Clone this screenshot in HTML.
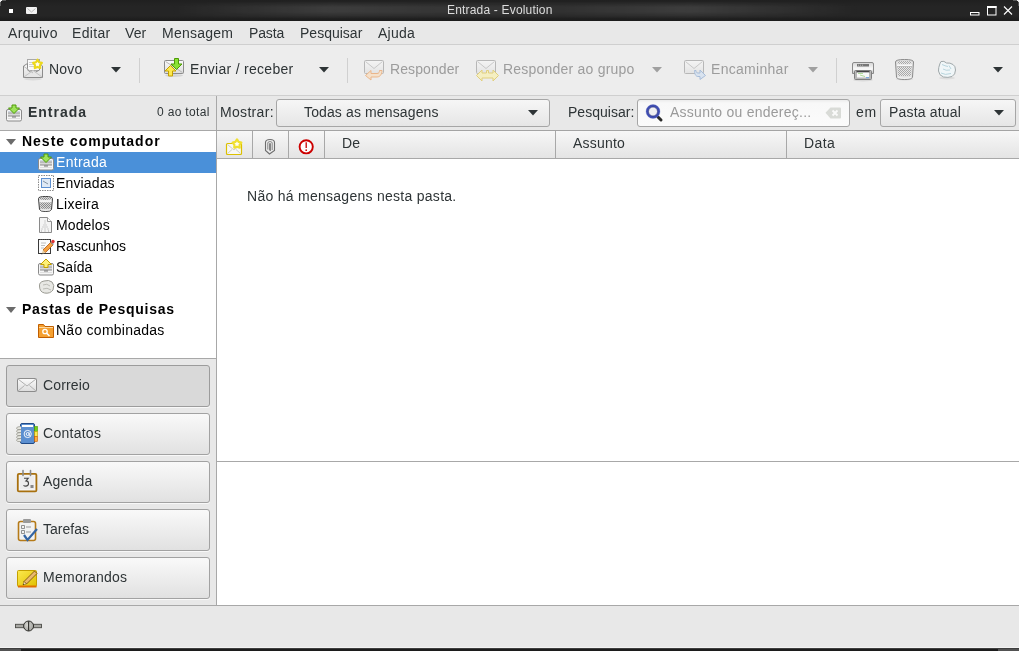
<!DOCTYPE html>
<html><head><meta charset="utf-8">
<style>
*{margin:0;padding:0;box-sizing:border-box}
html,body{width:1019px;height:651px;overflow:hidden;background:#e8e8e8}
body{position:relative;font-family:"Liberation Sans",sans-serif;font-size:14px;color:#2e3436}
.a{position:absolute}
.t{position:absolute;white-space:nowrap;line-height:16px}
svg{position:absolute;overflow:visible}
</style></head><body>

<!-- title bar -->
<div class="a" style="left:0;top:0;width:1019px;height:21px;background:linear-gradient(#202020,#252525 30%,#252525 75%,#1b1b1b)"></div>
<div class="a" style="left:0;top:1px;width:1019px;height:18px;background:linear-gradient(to right,rgba(255,255,255,0) 170px,rgba(255,255,255,0.11) 330px,rgba(255,255,255,0.07) 470px,rgba(255,255,255,0.06) 560px,rgba(255,255,255,0.11) 690px,rgba(255,255,255,0) 860px);-webkit-mask-image:linear-gradient(to bottom,transparent,#000 35%,#000 60%,transparent)"></div>
<div class="a" style="left:0;top:0;width:2px;height:1px;background:#f0f0f0"></div>
<div class="a" style="left:0;top:1px;width:1px;height:1px;background:#e0e0e0"></div>
<div class="a" style="left:2px;top:0;width:4px;height:1px;background:#5a5a5a"></div>
<div class="a" style="left:0;top:2px;width:1px;height:4px;background:#5a5a5a"></div>
<div class="a" style="left:1017px;top:0;width:2px;height:1px;background:#f0f0f0"></div>
<div class="a" style="left:1018px;top:1px;width:1px;height:1px;background:#e0e0e0"></div>
<div class="a" style="left:1013px;top:0;width:4px;height:1px;background:#5a5a5a"></div>
<div class="a" style="left:1018px;top:2px;width:1px;height:4px;background:#5a5a5a"></div>

<!-- menubar -->
<div class="a" style="left:0;top:21px;width:1019px;height:24px;background:#e8e8e8;border-bottom:1px solid #cfcfcf"></div>

<!-- toolbar -->
<div class="a" style="left:0;top:45px;width:1019px;height:51px;background:#ededed;border-bottom:1px solid #cfcfcf"></div>
<div class="a" style="left:139px;top:58px;width:1px;height:25px;background:#d0d0d0"></div>
<div class="a" style="left:347px;top:58px;width:1px;height:25px;background:#d0d0d0"></div>
<div class="a" style="left:836px;top:58px;width:1px;height:25px;background:#d0d0d0"></div>
<svg style="left:111px;top:67px" width="10" height="6"><path d="M0 0H10L5 5.5Z" fill="#2e3436"/></svg>
<svg style="left:319px;top:67px" width="10" height="6"><path d="M0 0H10L5 5.5Z" fill="#2e3436"/></svg>
<svg style="left:652px;top:67px" width="10" height="6"><path d="M0 0H10L5 5.5Z" fill="#a0a0a0"/></svg>
<svg style="left:808px;top:67px" width="10" height="6"><path d="M0 0H10L5 5.5Z" fill="#a0a0a0"/></svg>
<svg style="left:993px;top:67px" width="10" height="6"><path d="M0 0H10L5 5.5Z" fill="#2e3436"/></svg>

<!-- header row -->
<div class="a" style="left:216px;top:96px;width:1px;height:509px;background:#a8a8a8"></div>
<div class="a" style="left:276px;top:99px;width:274px;height:28px;border:1px solid #a6a6a6;border-radius:3px;background:linear-gradient(#f6f6f6,#e6e6e6)"></div>
<svg style="left:528px;top:110px" width="10" height="6"><path d="M0 0H10L5 5.5Z" fill="#2e3436"/></svg>
<div class="a" style="left:637px;top:99px;width:213px;height:28px;border:1px solid #a6a6a6;border-radius:3px;background:linear-gradient(#ececec,#f8f8f8 3px,#fbfbfb)"></div>
<div class="a" style="left:880px;top:99px;width:136px;height:28px;border:1px solid #a6a6a6;border-radius:3px;background:linear-gradient(#f6f6f6,#e6e6e6)"></div>
<svg style="left:994px;top:110px" width="10" height="6"><path d="M0 0H10L5 5.5Z" fill="#2e3436"/></svg>

<!-- folder tree -->
<div class="a" style="left:0;top:130px;width:216px;height:229px;background:#fff;border-top:1px solid #a8a8a8;border-bottom:1px solid #a8a8a8"></div>
<div class="a" style="left:0;top:152px;width:216px;height:21px;background:#4a90d9"></div>
<svg style="left:6px;top:139px" width="10" height="6"><path d="M0 0H10L5 6Z" fill="#6b6b6b"/></svg>
<svg style="left:6px;top:307px" width="10" height="6"><path d="M0 0H10L5 6Z" fill="#6b6b6b"/></svg>

<!-- switcher buttons -->
<div class="a" style="left:6px;top:365px;width:204px;height:42px;border:1px solid #9c9c9c;border-radius:3px;box-shadow:0 1px 0 #f8f8f8;background:#d9d9d9"></div>
<div class="a" style="left:6px;top:413px;width:204px;height:42px;border:1px solid #a2a2a2;border-radius:3px;box-shadow:0 1px 0 #f8f8f8;background:linear-gradient(#f9f9f9,#e1e1e1)"></div>
<div class="a" style="left:6px;top:461px;width:204px;height:42px;border:1px solid #a2a2a2;border-radius:3px;box-shadow:0 1px 0 #f8f8f8;background:linear-gradient(#f9f9f9,#e1e1e1)"></div>
<div class="a" style="left:6px;top:509px;width:204px;height:42px;border:1px solid #a2a2a2;border-radius:3px;box-shadow:0 1px 0 #f8f8f8;background:linear-gradient(#f9f9f9,#e1e1e1)"></div>
<div class="a" style="left:6px;top:557px;width:204px;height:42px;border:1px solid #a2a2a2;border-radius:3px;box-shadow:0 1px 0 #f8f8f8;background:linear-gradient(#f9f9f9,#e1e1e1)"></div>

<!-- message list -->
<div class="a" style="left:216px;top:130px;width:803px;height:1px;background:#a4a4a4"></div>
<div class="a" style="left:217px;top:131px;width:802px;height:28px;background:linear-gradient(#f7f7f7,#e4e4e4);border-bottom:1px solid #a8a8a8"></div>
<div class="a" style="left:252px;top:131px;width:1px;height:27px;background:#a8a8a8"></div>
<div class="a" style="left:288px;top:131px;width:1px;height:27px;background:#a8a8a8"></div>
<div class="a" style="left:324px;top:131px;width:1px;height:27px;background:#a8a8a8"></div>
<div class="a" style="left:555px;top:131px;width:1px;height:27px;background:#a8a8a8"></div>
<div class="a" style="left:786px;top:131px;width:1px;height:27px;background:#a8a8a8"></div>
<div class="a" style="left:217px;top:159px;width:802px;height:302px;background:#fff"></div>
<div class="a" style="left:217px;top:461px;width:802px;height:1px;background:#a8a8a8"></div>
<div class="a" style="left:217px;top:462px;width:802px;height:143px;background:#fff"></div>

<!-- status bar -->
<div class="a" style="left:0;top:605px;width:1019px;height:1px;background:#a8a8a8"></div>
<div class="a" style="left:0;top:606px;width:1019px;height:41px;background:#e8e8e8"></div>
<div class="a" style="left:0;top:647px;width:1019px;height:1px;background:#f2f2f2"></div>
<div class="a" style="left:0;top:648px;width:1019px;height:1px;background:#3e3e3e"></div>
<div class="a" style="left:0;top:649px;width:1019px;height:2px;background:#1c1c1c"></div>
<div class="a" style="left:0;top:649px;width:21px;height:2px;background:#525252"></div>
<div class="a" style="left:998px;top:649px;width:21px;height:2px;background:#525252"></div>

<svg style="left:0;top:0" width="1019" height="651" viewBox="0 0 1019 651">
<defs>
<linearGradient id="env" x1="0" y1="0" x2="0" y2="1"><stop offset="0" stop-color="#fbfbfb"/><stop offset="1" stop-color="#dcdcdc"/></linearGradient>
<linearGradient id="grey" x1="0" y1="0" x2="0" y2="1"><stop offset="0" stop-color="#e0e0e0"/><stop offset="1" stop-color="#9a9a9a"/></linearGradient>
<pattern id="mesh" width="2" height="2" patternUnits="userSpaceOnUse"><rect width="2" height="2" fill="#d8d8d8"/><rect width="1" height="1" fill="#7a7a7a"/><rect x="1" y="1" width="1" height="1" fill="#7a7a7a"/></pattern>
<linearGradient id="prn" x1="0" y1="0" x2="0" y2="1"><stop offset="0" stop-color="#d6d6d6"/><stop offset="0.5" stop-color="#f4f4f4"/><stop offset="1" stop-color="#c4c4c4"/></linearGradient>
<pattern id="mesh2" width="2" height="2" patternUnits="userSpaceOnUse"><rect width="2" height="2" fill="#e8e8e8"/><rect width="1" height="1" fill="#a8a8a8"/><rect x="1" y="1" width="1" height="1" fill="#a8a8a8"/></pattern>
<linearGradient id="trayin" x1="0" y1="0" x2="0" y2="1"><stop offset="0" stop-color="#9a9a9a"/><stop offset="0.5" stop-color="#d8d8d8"/><stop offset="1" stop-color="#8a8a8a"/></linearGradient>
<pattern id="mesh3" width="2" height="2" patternUnits="userSpaceOnUse"><rect width="2" height="2" fill="#d8d8d8"/><rect width="1" height="1" fill="#8a8a8a"/><rect x="1" y="1" width="1" height="1" fill="#8a8a8a"/></pattern>
<linearGradient id="memo" x1="0" y1="0" x2="1" y2="1"><stop offset="0" stop-color="#fce94f"/><stop offset="1" stop-color="#e0c000"/></linearGradient>
<radialGradient id="plug" cx="0.4" cy="0.4" r="0.7"><stop offset="0" stop-color="#d8d8d4"/><stop offset="1" stop-color="#9a9a96"/></radialGradient>
</defs>
<!-- title bar icons -->
<g>
<rect x="9" y="9" width="4" height="4" fill="#fff"/>
<rect x="26" y="7" width="11" height="7" rx="1" fill="#f2f2f2"/>
<path d="M27.5 8.5L31.5 12L35.5 8.5" stroke="#aaa" stroke-width="0.8" fill="none"/>
<rect x="970.5" y="12.5" width="8.5" height="2.5" fill="none" stroke="#fff" stroke-width="1"/>
<rect x="987.5" y="6.5" width="8.5" height="8.5" fill="none" stroke="#fff" stroke-width="1"/>
<rect x="987" y="6" width="9.5" height="2" fill="#fff"/>
<path d="M1004 6.5L1012 14.5M1012 6.5L1004 14.5" stroke="#fff" stroke-width="1.1"/>
</g>
<!-- Novo icon -->
<g>
<ellipse cx="33" cy="79" rx="9" ry="1.5" fill="#000" opacity="0.08"/>
<rect x="27.5" y="59.5" width="12" height="11" fill="#fafafa" stroke="#a8a8a8"/>
<path d="M29 62.5h8M29 64.5h8M29 66.5h6" stroke="#cfcfcf"/>
<path d="M23.5 66L27.5 63.5V70L33 73.5L39.5 70V63.5L42.5 66V77.5H23.5Z" fill="url(#env)" stroke="#8c8c8c"/>
<path d="M24 77L33 70.5L42 77" fill="#e6e6e6" stroke="#c4c4c4"/>
<path d="M24 66.5L33 73" stroke="#bdbdbd" fill="none"/>
<path d="M37.50 59.70L39.03 62.20L41.87 62.88L39.97 65.10L40.20 68.02L37.50 66.90L34.80 68.02L35.03 65.10L33.13 62.88L35.97 62.20Z" fill="#fffef0" stroke="#ecd81c" stroke-width="2.2" stroke-linejoin="round"/>
</g>
<!-- Enviar/receber icon -->
<g>
<ellipse cx="174" cy="75.5" rx="9" ry="1.5" fill="#000" opacity="0.1"/>
<rect x="164.5" y="60.5" width="19" height="13" rx="1" fill="url(#env)" stroke="#8c8c8c"/>
<path d="M165.5 61.5L182.5 72.5" stroke="#aaa" stroke-width="0.8"/>
<path d="M174.5 58.5h4v5.5h3.5l-5.5 5.5l-5.5-5.5h3.5z" fill="#8ae234" stroke="#4e9a06" stroke-linejoin="round"/>
<path d="M170.5 65.5l5.5 5.5h-3.5v5h-4v-5h-3.5z" fill="#fce94f" stroke="#c4a000" stroke-linejoin="round"/>
</g>
<!-- Responder (disabled) -->
<g opacity="0.55">
<rect x="364.5" y="60.5" width="19" height="13" rx="1" fill="url(#env)" stroke="#8c8c8c"/>
<path d="M365.5 61.5L374 68.5L382.5 61.5" stroke="#aaa" fill="none"/>
<path d="M365.5 75.5L371 70.5v3h6c2 0 2.5-1.5 2.5-3h2.5c0 3-1.5 6.5-5 6.5h-6v3z" fill="#fcd9b0" stroke="#e9893a" stroke-linejoin="round"/>
</g>
<!-- Responder ao grupo (disabled) -->
<g opacity="0.55">
<rect x="476.5" y="60.5" width="19" height="13" rx="1" fill="url(#env)" stroke="#8c8c8c"/>
<path d="M477.5 61.5L486 68.5L494.5 61.5" stroke="#aaa" fill="none"/>
<path d="M476.5 75.5L482 70v3h4.5l0-2.5h2v2.5h4.5v-3l5.5 5.5l-5.5 5.5v-3h-11v3z" fill="#fcf2a0" stroke="#d8b820" stroke-linejoin="round"/>
</g>
<!-- Encaminhar (disabled) -->
<g opacity="0.55">
<rect x="684.5" y="60.5" width="19" height="13" rx="1" fill="url(#env)" stroke="#8c8c8c"/>
<path d="M685.5 61.5L694 68.5L702.5 61.5" stroke="#aaa" fill="none"/>
<path d="M705.5 75.5L700 70v3h-2c-1.5 0-2-1-2-2.5h-1.5c0 3 1 6 3.5 6h2v3z" fill="#c9dbf2" stroke="#6f95c8" stroke-linejoin="round"/>
</g>
<!-- Printer -->
<g>
<ellipse cx="863" cy="80" rx="10" ry="1.5" fill="#000" opacity="0.08"/>
<path d="M852.5 64Q852.5 62.5 854 62.5H872Q873.5 62.5 873.5 64V73.5H852.5Z" fill="url(#prn)" stroke="#8a8a8a"/>
<rect x="857" y="64" width="12" height="2.5" fill="#777"/>
<path d="M858 65.2h1M860 65.2h1M862 65.2h1" stroke="#ccc" stroke-width="0.8"/>
<rect x="853.5" y="68" width="19" height="2.5" fill="#f6f6f6"/>
<rect x="854.5" y="70.5" width="17" height="9" rx="1" fill="#b8b8b8" stroke="#7e7e7e"/>
<rect x="856.5" y="71" width="13" height="1.5" fill="#444"/>
<rect x="857" y="72.5" width="12" height="5" fill="#f8f8f8"/>
<path d="M858 73.5h5M860 75l5 1.5" stroke="#a8d890" stroke-width="0.9"/>
<rect x="866" y="77" width="3" height="1.2" fill="#7aa8e0"/>
</g>
<!-- Trash -->
<g>
<ellipse cx="904.5" cy="79" rx="9" ry="1.5" fill="#000" opacity="0.08"/>
<path d="M895.5 62Q895.5 59.5 904.5 59.5Q913.5 59.5 913.5 62L912.5 77Q912 79.5 904.5 79.5Q897 79.5 896.5 77Z" fill="#e2e2e2" stroke="#8a8a8a"/>
<ellipse cx="904.5" cy="62.5" rx="7.5" ry="1.8" fill="url(#mesh2)"/>
<rect x="897" y="64.5" width="15" height="2" fill="#f8f8f8"/>
<path d="M897 66.5h15" stroke="#b0b0b0" stroke-width="0.8"/>
<path d="M897.5 67L898 76H911L911.5 67Z" fill="url(#mesh2)"/>
<path d="M897.5 77.5Q904.5 79 911.5 77.5" stroke="#f6f6f6" stroke-width="1.2" fill="none"/>
</g>
<!-- Spam -->
<g>
<ellipse cx="947" cy="78" rx="8" ry="1.5" fill="#000" opacity="0.07"/>
<path d="M941 61.5Q944 60.5 946.5 63Q950 62.5 953 64.5Q955.5 66 955.5 70Q955.5 74.5 952 76.5Q948 78 943.5 77Q939 75.5 938.5 71Q938.5 67 939.5 65Q940 63 941 61.5Z" fill="#f0f6f8" stroke="#a0a8aa"/>
<path d="M942 64.5Q945 66 948 66.5M943 69Q946 71 950 70M941 73Q945 75.5 951 73.5M949 65.5L951 69" stroke="#a8ccd6" fill="none" stroke-width="0.8"/>
</g>
<!-- Search icon -->
<g>
<path d="M658 117L661 120" stroke="#2a2a2a" stroke-width="3" stroke-linecap="round"/>
<circle cx="653" cy="111.5" r="5.8" fill="#f0f0f2" stroke="#3f4db0" stroke-width="2.4"/>
<circle cx="653" cy="111.5" r="4.5" fill="none" stroke="#232a78" stroke-width="0.6"/>
<circle cx="653" cy="111.5" r="7" fill="none" stroke="#6c7ad0" stroke-width="0.5" opacity="0.6"/>
</g>
<!-- Clear icon -->
<g>
<path d="M825.5 112.8L830.5 107.5H840Q841 107.5 841 108.5V117.5Q841 118.5 840 118.5H830.5Z" fill="#d9dbd7"/>
<path d="M832.5 110.5L837.5 115.5M837.5 110.5L832.5 115.5" stroke="#fafafa" stroke-width="1.8"/>
</g>
<!-- Header Entrada icon -->
<g transform="translate(6,105)">
<rect x="0.5" y="4.5" width="15" height="11.5" rx="1.5" fill="#f6f6f6" stroke="#8a8a8a"/>
<rect x="2" y="6" width="12" height="1.5" fill="#d0d8e4"/>
<rect x="2" y="7.5" width="12" height="4" fill="url(#trayin)"/>
<rect x="6" y="11.5" width="4" height="1" fill="#707070"/>
<rect x="2" y="13" width="12" height="1" fill="#dedede"/>
</g><g transform="translate(6,104.5)"><path d="M6 0.5h4v3h3.5l-5.5 5.5l-5.5-5.5h3.5z" fill="#9ee35a" stroke="#4e9a06" stroke-linejoin="round"/></g>
<!-- tree icons -->
<g transform="translate(38,154)">
<rect x="0.5" y="4.5" width="15" height="11.5" rx="1.5" fill="#f6f6f6" stroke="#8a8a8a"/>
<rect x="2" y="6" width="12" height="1.5" fill="#d0d8e4"/>
<rect x="2" y="7.5" width="12" height="4" fill="url(#trayin)"/>
<rect x="6" y="11.5" width="4" height="1" fill="#707070"/>
<rect x="2" y="13" width="12" height="1" fill="#dedede"/>
</g><g transform="translate(38,153.5)"><path d="M6 0.5h4v3h3.5l-5.5 5.5l-5.5-5.5h3.5z" fill="#9ee35a" stroke="#4e9a06" stroke-linejoin="round"/></g>
<g>
<rect x="38.5" y="175.5" width="15" height="15" fill="#fff" stroke="#8a8a8a" stroke-dasharray="1.5 1"/>
<rect x="41.5" y="178.5" width="9" height="9" fill="#dfe9f5" stroke="#5d8fd0"/>
<path d="M43 181L48 184" stroke="#6a7a8a" stroke-width="0.8"/>
</g>
<g>
<path d="M38.5 198.5Q38.5 196.5 45.5 196.5Q52.5 196.5 52.5 198.5L51.5 209.5Q51 211.5 45.5 211.5Q40 211.5 39.5 209.5Z" fill="#e0e0e0" stroke="#3a3a3a"/>
<ellipse cx="45.5" cy="198.6" rx="5.8" ry="1.4" fill="url(#mesh3)"/>
<rect x="39.5" y="200.3" width="12" height="1.5" fill="#fafafa"/>
<path d="M40 202.5L40.5 208.8H50.5L51 202.5Z" fill="url(#mesh3)"/>
<path d="M40.5 209.8Q45.5 211 50.5 209.8" stroke="#f4f4f4" fill="none"/>
</g>
<g>
<path d="M39.5 217.5h8l4 4v11h-12z" fill="#f4f4f4" stroke="#8a8a8a"/>
<path d="M47.5 217.5v4h4" fill="#fff" stroke="#9a9a9a"/>
<path d="M45 220.5v1M45 222.5v1M44 224.5v1M46 224.5v1M43 226.5v1M45 226.5v1M47 226.5v1M42 228.5v1M45 228.5v1M48 228.5v1M41.5 230.5v1M45 230.5v1M48.5 230.5v1" stroke="#a8a8a8"/>
</g>
<g>
<rect x="38.5" y="239.5" width="12" height="14" fill="#fbfbfb" stroke="#3a3a3a"/>
<path d="M40 239.5h9" stroke="#555" stroke-dasharray="1 1"/>
<path d="M41 243h5M41 245.5h4M41 248h3" stroke="#b0b0b0" stroke-width="0.8"/>
<path d="M43 250L50.5 242.5L53 245L45.5 252.5Z" fill="#f5a040" stroke="#b35a10" stroke-width="0.8"/>
<path d="M43 250L41.5 254L45.5 252.5Z" fill="#e8d0a0"/><path d="M41.8 253.2L41.5 254L42.4 253.8Z" fill="#222" stroke="#222" stroke-width="0.8"/>
<path d="M50.5 242.5L51.5 241.5L54 244L53 245Z" fill="#999"/>
<circle cx="53" cy="241.5" r="1.7" fill="#e03030"/>
</g>
<g transform="translate(38,259)">
<rect x="0.5" y="4.5" width="15" height="11.5" rx="1.5" fill="#f6f6f6" stroke="#8a8a8a"/>
<rect x="2" y="6" width="12" height="1.5" fill="#d0d8e4"/>
<rect x="2" y="7.5" width="12" height="4" fill="url(#trayin)"/>
<rect x="6" y="11.5" width="4" height="1" fill="#707070"/>
<rect x="2" y="13" width="12" height="1" fill="#dedede"/>
</g><g transform="translate(38,258.5)"><path d="M8 0.5l5.5 5.5h-3.5v3h-4v-3h-3.5z" fill="#fdf07a" stroke="#c4a000" stroke-linejoin="round"/></g>
<g>
<path d="M39.5 286Q39 282 44 281Q49 279.5 52 282Q55 285 53 290Q50 294 44.5 293Q39.5 292 39.5 286Z" fill="#e8e8e4" stroke="#9a9a92"/>
<path d="M43 285Q47 283 50 286M43 289Q47 287 51 290" stroke="#b0b0aa" fill="none" stroke-width="0.8"/>
</g>
<g>
<path d="M38.5 324.5h5l1.5 2h8.5v11h-15z" fill="#f5a030" stroke="#c05e00"/>
<rect x="39" y="327" width="14" height="1" fill="#fcd9a0"/>
<circle cx="45" cy="331.5" r="2.2" fill="none" stroke="#fff" stroke-width="1.3"/>
<path d="M46.5 333L49.5 336" stroke="#fff" stroke-width="1.5"/>
</g>
<!-- column header icons -->
<g>
<rect x="226.5" y="143.5" width="15" height="11" rx="1" fill="#f8f8f4" stroke="#dcc000" stroke-width="1.2"/>
<path d="M227.5 144.5L234 150L240.5 144.5M227.5 153.5L232 149.5M240.5 153.5L236 149.5" stroke="#c8c8c0" fill="none" stroke-width="0.9"/>
<path d="M237.00 139.40L238.59 141.82L241.37 142.58L239.57 144.83L239.70 147.72L237.00 146.70L234.30 147.72L234.43 144.83L232.63 142.58L235.41 141.82Z" fill="#fffef0" stroke="#f0e030" stroke-width="2.2" stroke-linejoin="round"/>
</g>
<g>
<path d="M269.5 154L265.5 150.5V142.5Q265.5 139.5 270 139.5Q274.5 139.5 274.5 142.5V150.5Z" fill="none" stroke="#6e6e6e" stroke-width="1.1"/>
<path d="M267.8 149.5V143Q267.8 141.6 270 141.6Q272.2 141.6 272.2 143V150M269.5 150.5V143.5Q270 142.8 270.5 143.5V151" fill="none" stroke="#7a7a7a" stroke-width="0.9"/>
</g>
<g>
<circle cx="306.2" cy="146.8" r="6.6" fill="#fff" stroke="#cc0000" stroke-width="1.9"/>
<path d="M306.2 142.3L306.2 148" stroke="#cc0000" stroke-width="1.3"/>
<circle cx="306.2" cy="150.2" r="0.85" fill="#cc0000"/>
</g>
<!-- button icons -->
<g>
<rect x="17.5" y="378.5" width="19" height="13" rx="1" fill="url(#env)" stroke="#8c8c8c"/>
<path d="M18 379L27 386L36 379M18 391L24.5 385.5M36 391L29.5 385.5" stroke="#b0b0b0" fill="none"/>
</g>
<g>
<rect x="20.5" y="423.5" width="14" height="20" rx="1.5" fill="#5b8fd0" stroke="#204a87"/>
<rect x="22" y="425" width="11" height="2" fill="#fff"/>
<rect x="34.5" y="426.5" width="3" height="5" fill="#73d216" stroke="#4e9a06" stroke-width="0.6"/>
<rect x="34.5" y="431.5" width="3" height="5" fill="#fce94f" stroke="#c4a000" stroke-width="0.6"/>
<rect x="34.5" y="436.5" width="3" height="5" fill="#fcaf3e" stroke="#ce5c00" stroke-width="0.6"/>
<path d="M21 426.5Q16 426.5 16.5 428.5Q17 430 21 429.5M21 429.5Q16 429.5 16.5 431.5Q17 433 21 432.5M21 432.5Q16 432.5 16.5 434.5Q17 436 21 435.5M21 435.5Q16 435.5 16.5 437.5Q17 439 21 438.5M21 438.5Q16 438.5 16.5 440.5Q17 442 21 441.5" stroke="#9a9a92" stroke-width="0.8" fill="#e6e6e0"/>
<circle cx="27.7" cy="434" r="3.6" fill="none" stroke="#fff" stroke-width="0.9"/>
<circle cx="27.7" cy="434" r="1.5" fill="none" stroke="#fff" stroke-width="0.9"/><path d="M29.2 432.5v2.5q0 1 1.2 0.8" stroke="#fff" stroke-width="0.9" fill="none"/>
</g>
<g>
<rect x="17.8" y="473.8" width="18.6" height="17.6" rx="1.2" fill="#f4f4f4" stroke="#a8700e" stroke-width="1.8"/>
<rect x="20" y="476" width="14" height="13" fill="#ededed"/>
<path d="M23 470.5v5M30.5 470.5v5" stroke="#8a8a8a" stroke-width="1.6" stroke-linecap="round"/>
<path d="M24 478.3h4.2l-2.3 2.6q2.6 0 2.6 2.6q0 2.6-2.8 2.6q-1.3 0-2.2-0.8" fill="none" stroke="#444" stroke-width="1.1"/>
<rect x="30.5" y="485" width="3" height="3" fill="#888"/>
</g>
<g>
<rect x="18.5" y="521.5" width="17" height="19" rx="2" fill="#f2f2f2" stroke="#b57a18" stroke-width="1.6"/>
<rect x="23" y="519" width="8" height="4" rx="1" fill="#9a9a9a"/>
<path d="M21.5 525.5h3v3h-3zM21.5 530.5h3v3h-3z" fill="none" stroke="#777" stroke-width="0.8"/>
<path d="M26 527h5M26 532h5" stroke="#999"/>
<path d="M24 535L27.5 540L37 529" fill="none" stroke="#3465a4" stroke-width="2.2"/>
</g>
<g>
<rect x="17.5" y="570.5" width="19" height="16" rx="1" fill="url(#memo)" stroke="#c4a000"/>
<rect x="18" y="585.5" width="18.5" height="2" fill="#e07000"/>
<path d="M24 581.5L34.5 571L37 573.5L26.5 584Z" fill="#e9b96e" stroke="#6f4502" stroke-width="0.8"/>
<path d="M24 581.5L23 584.8L26.5 584Z" fill="#f0e0c0" stroke="#6f4502" stroke-width="0.5"/>
<path d="M23.3 583.8L23 584.8L24.1 584.5Z" fill="#111"/>
</g>
<!-- status bar plug -->
<g>
<rect x="15.5" y="624.3" width="26" height="3.4" fill="#a8a8a4" stroke="#4a4a46" stroke-width="0.9"/>
<circle cx="28.6" cy="626" r="5" fill="url(#plug)" stroke="#2e2e2a" stroke-width="1"/>
<path d="M28.6 621.2v9.6" stroke="#2e2e2a" stroke-width="1.1"/>
</g>
</svg>
<div id="txt" style="position:absolute;left:0;top:0;width:1019px;height:651px;will-change:transform">
<div class="t" style="left:447px;top:2px;font-size:12px;font-weight:normal;letter-spacing:0.182px;color:#dcdcdc">Entrada - Evolution</div>
<div class="t" style="left:8px;top:25px;font-size:14px;font-weight:normal;letter-spacing:0.326px;color:#2e3436">Arquivo</div>
<div class="t" style="left:72px;top:25px;font-size:14px;font-weight:normal;letter-spacing:0.320px;color:#2e3436">Editar</div>
<div class="t" style="left:125px;top:25px;font-size:14px;font-weight:normal;letter-spacing:0.068px;color:#2e3436">Ver</div>
<div class="t" style="left:162px;top:25px;font-size:14px;font-weight:normal;letter-spacing:0.234px;color:#2e3436">Mensagem</div>
<div class="t" style="left:249px;top:25px;font-size:14px;font-weight:normal;letter-spacing:-0.147px;color:#2e3436">Pasta</div>
<div class="t" style="left:300px;top:25px;font-size:14px;font-weight:normal;letter-spacing:0.009px;color:#2e3436">Pesquisar</div>
<div class="t" style="left:378px;top:25px;font-size:14px;font-weight:normal;letter-spacing:0.231px;color:#2e3436">Ajuda</div>
<div class="t" style="left:49px;top:61px;font-size:14px;font-weight:normal;letter-spacing:0.160px;color:#2e3436">Novo</div>
<div class="t" style="left:190px;top:61px;font-size:14px;font-weight:normal;letter-spacing:0.294px;color:#2e3436">Enviar / receber</div>
<div class="t" style="left:390px;top:61px;font-size:14px;font-weight:normal;letter-spacing:0.089px;color:#9c9c9c">Responder</div>
<div class="t" style="left:503px;top:61px;font-size:14px;font-weight:normal;letter-spacing:0.215px;color:#9c9c9c">Responder ao grupo</div>
<div class="t" style="left:711px;top:61px;font-size:14px;font-weight:normal;letter-spacing:0.294px;color:#9c9c9c">Encaminhar</div>
<div class="t" style="left:28px;top:104px;font-size:14px;font-weight:bold;letter-spacing:0.983px;color:#2e3436">Entrada</div>
<div class="t" style="left:157px;top:104px;font-size:12px;font-weight:normal;letter-spacing:0.328px;color:#2e3436">0 ao total</div>
<div class="t" style="left:220px;top:104px;font-size:14px;font-weight:normal;letter-spacing:0.314px;color:#2e3436">Mostrar:</div>
<div class="t" style="left:304px;top:104px;font-size:14px;font-weight:normal;letter-spacing:0.127px;color:#2e3436">Todas as mensagens</div>
<div class="t" style="left:568px;top:104px;font-size:14px;font-weight:normal;letter-spacing:0.033px;color:#2e3436">Pesquisar:</div>
<div class="t" style="left:670px;top:104px;font-size:14px;font-weight:normal;letter-spacing:0.251px;color:#9a9a9a">Assunto ou endereç...</div>
<div class="t" style="left:856px;top:104px;font-size:14px;font-weight:normal;letter-spacing:0.609px;color:#2e3436">em</div>
<div class="t" style="left:889px;top:104px;font-size:14px;font-weight:normal;letter-spacing:0.185px;color:#2e3436">Pasta atual</div>
<div class="t" style="left:22px;top:133px;font-size:14px;font-weight:bold;letter-spacing:0.982px;color:#000">Neste computador</div>
<div class="t" style="left:56px;top:154px;font-size:14px;font-weight:normal;letter-spacing:0.295px;color:#fff">Entrada</div>
<div class="t" style="left:56px;top:175px;font-size:14px;font-weight:normal;letter-spacing:0.141px;color:#000">Enviadas</div>
<div class="t" style="left:56px;top:196px;font-size:14px;font-weight:normal;letter-spacing:0.263px;color:#000">Lixeira</div>
<div class="t" style="left:56px;top:217px;font-size:14px;font-weight:normal;letter-spacing:0.123px;color:#000">Modelos</div>
<div class="t" style="left:56px;top:238px;font-size:14px;font-weight:normal;letter-spacing:0.003px;color:#000">Rascunhos</div>
<div class="t" style="left:56px;top:259px;font-size:14px;font-weight:normal;letter-spacing:-0.106px;color:#000">Saída</div>
<div class="t" style="left:56px;top:280px;font-size:14px;font-weight:normal;letter-spacing:0.141px;color:#000">Spam</div>
<div class="t" style="left:22px;top:301px;font-size:14px;font-weight:bold;letter-spacing:0.750px;color:#000">Pastas de Pesquisas</div>
<div class="t" style="left:56px;top:322px;font-size:14px;font-weight:normal;letter-spacing:0.253px;color:#000">Não combinadas</div>
<div class="t" style="left:342px;top:135px;font-size:14px;font-weight:normal;letter-spacing:0.062px;color:#2e3436">De</div>
<div class="t" style="left:573px;top:135px;font-size:14px;font-weight:normal;letter-spacing:0.194px;color:#2e3436">Assunto</div>
<div class="t" style="left:804px;top:135px;font-size:14px;font-weight:normal;letter-spacing:0.371px;color:#2e3436">Data</div>
<div class="t" style="left:247px;top:188px;font-size:14px;font-weight:normal;letter-spacing:0.274px;color:#2e3436">Não há mensagens nesta pasta.</div>
<div class="t" style="left:43px;top:377px;font-size:14px;font-weight:normal;letter-spacing:0.127px;color:#2e3436">Correio</div>
<div class="t" style="left:43px;top:425px;font-size:14px;font-weight:normal;letter-spacing:0.266px;color:#2e3436">Contatos</div>
<div class="t" style="left:43px;top:473px;font-size:14px;font-weight:normal;letter-spacing:0.224px;color:#2e3436">Agenda</div>
<div class="t" style="left:43px;top:521px;font-size:14px;font-weight:normal;letter-spacing:0.033px;color:#2e3436">Tarefas</div>
<div class="t" style="left:43px;top:569px;font-size:14px;font-weight:normal;letter-spacing:0.269px;color:#2e3436">Memorandos</div>
</div>
</body></html>
